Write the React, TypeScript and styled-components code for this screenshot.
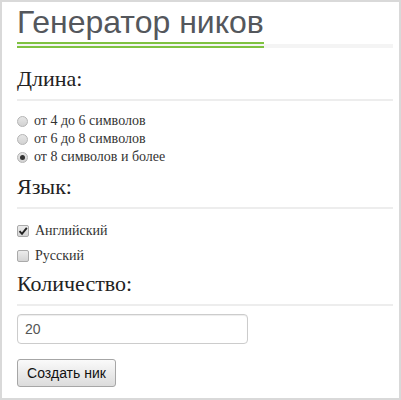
import React, { useState } from "react";
import styled, { createGlobalStyle } from "styled-components";

const Global = createGlobalStyle`
  html, body { margin: 0; padding: 0; background: #fff; }
  * { box-sizing: border-box; }
`;

const Frame = styled.div`
  width: 401px;
  height: 400px;
  border: 2px solid #d9d9d9;
  background: #fff;
  padding: 2px 6px 0 15px;
  overflow: hidden;
`;

const TitleBar = styled.div`
  display: flex;
  align-items: flex-end;
  border-bottom: 4px solid #f4f4f4;
`;

const TitleText = styled.h1`
  margin: 0 0 -4px 0;
  display: inline-block;
  font-family: "Liberation Sans", Arial, sans-serif;
  font-weight: normal;
  font-size: 32px;
  line-height: 36px;
  color: #54575c;
  padding-bottom: 2px;
  border-bottom: 6px double #7fc241;
`;

const SectionTitle = styled.h3<{ $top: number }>`
  margin: ${(p) => p.$top}px 0 0 0;
  font-family: "Liberation Serif", "Times New Roman", serif;
  font-weight: normal;
  font-size: 22px;
  line-height: 26px;
  color: #222;
  padding-bottom: 7px;
  border-bottom: 2px solid #ededed;
`;

const OptionList = styled.div<{ $top: number }>`
  display: flex;
  flex-direction: column;
  margin-top: ${(p) => p.$top}px;
`;

const OptionRow = styled.label<{ $h: number }>`
  display: flex;
  align-items: center;
  height: ${(p) => p.$h}px;
  font-family: "Liberation Serif", "Times New Roman", serif;
  font-size: 14px;
  color: #333;
  cursor: pointer;
`;

const RadioDot = styled.span<{ $on: boolean }>`
  width: 11px;
  height: 11px;
  border-radius: 50%;
  border: 1px solid #b4b4b4;
  background: linear-gradient(#e6e6e6, #d2d2d2);
  margin-right: 6px;
  display: flex;
  align-items: center;
  justify-content: center;
  &::after {
    content: "";
    width: 5px;
    height: 5px;
    border-radius: 50%;
    background: ${(p) => (p.$on ? "#333" : "transparent")};
  }
`;

const CheckBox = styled.span`
  width: 12px;
  height: 12px;
  border-radius: 2px;
  border: 1px solid #aaa;
  background: linear-gradient(#ececec, #d4d4d4);
  margin-right: 6px;
  display: flex;
  align-items: center;
  justify-content: center;
`;

const Field = styled.input`
  display: block;
  margin-top: 8px;
  width: 231px;
  height: 30px;
  border: 1px solid #ccc;
  border-radius: 4px;
  box-shadow: inset 0 1px 1px rgba(0, 0, 0, 0.075);
  padding: 0 7px;
  font-family: "Liberation Sans", Arial, sans-serif;
  font-size: 14px;
  color: #555;
  outline: none;
`;

const Button = styled.button`
  display: block;
  margin-top: 15px;
  width: 99px;
  height: 28px;
  border: 1px solid #a6a6a6;
  border-radius: 3px;
  background: linear-gradient(#fafafa, #dcdcdc);
  font-family: "Liberation Sans", Arial, sans-serif;
  font-size: 14px;
  color: #111;
  padding: 0;
`;

const Hidden = styled.input`
  display: none;
`;

const lengths = ["от 4 до 6 символов", "от 6 до 8 символов", "от 8 символов и более"];

export default function App() {
  const [len, setLen] = useState(2);
  const [langs, setLangs] = useState({ en: true, ru: false });
  const [count, setCount] = useState("20");

  return (
    <>
      <Global />
      <Frame>
        <TitleBar>
          <TitleText>Генератор ников</TitleText>
        </TitleBar>

        <SectionTitle $top={18}>Длина:</SectionTitle>
        <OptionList $top={11}>
          {lengths.map((t, i) => (
            <OptionRow key={t} $h={18}>
              <Hidden type="radio" name="len" checked={len === i} onChange={() => setLen(i)} />
              <RadioDot $on={len === i} />
              {t}
            </OptionRow>
          ))}
        </OptionList>

        <SectionTitle $top={8}>Язык:</SectionTitle>
        <OptionList $top={9}>
          {([
            ["en", "Английский"],
            ["ru", "Русский"],
          ] as const).map(([k, t]) => (
            <OptionRow key={k} $h={25}>
              <Hidden
                type="checkbox"
                checked={langs[k]}
                onChange={() => setLangs({ ...langs, [k]: !langs[k] })}
              />
              <CheckBox>
                {langs[k] && (
                  <svg width="10" height="10" viewBox="0 0 10 10">
                    <path d="M1.5 5.2 L4 7.8 L8.8 1.8" fill="none" stroke="#222" strokeWidth="1.9" />
                  </svg>
                )}
              </CheckBox>
              {t}
            </OptionRow>
          ))}
        </OptionList>

        <SectionTitle $top={3}>Количество:</SectionTitle>
        <Field value={count} onChange={(e) => setCount(e.target.value)} />
        <Button>Создать ник</Button>
      </Frame>
    </>
  );
}
